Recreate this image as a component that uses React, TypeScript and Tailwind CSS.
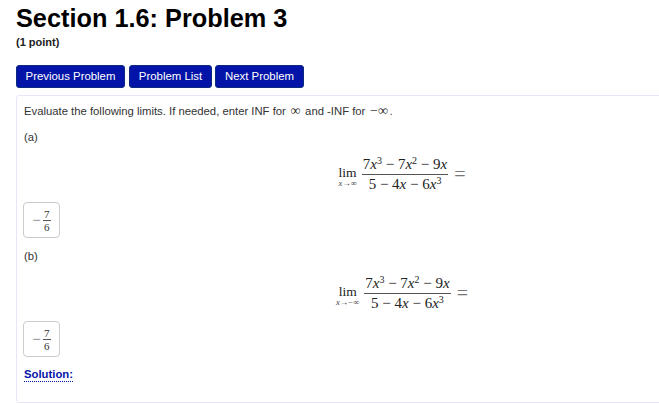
const Sup = ({ children }: { children: React.ReactNode }) => (
  <sup className="text-[10px] top-[-5px] not-italic">{children}</sup>
);

const V = ({ children }: { children: React.ReactNode }) => <i className="italic">{children}</i>;

const Limit = ({ to }: { to: string }) => (
  <div className="flex items-center justify-center w-[758px] h-[48px] mt-[6px] text-[#222] font-['Liberation_Serif',serif] text-[15px]">
    {/* lim */}
    <div className="flex flex-col items-center mr-[5px] mt-[6px]">
      <span className="leading-[11px] text-[13.5px]">lim</span>
      <span className="leading-[10px] text-[8.5px] text-[#444] whitespace-nowrap">
        <i>x</i>→{to}
      </span>
    </div>
    {/* fraction */}
    <div className="flex flex-col items-center">
      <div className="px-[1px] pb-[1px] leading-[17px] whitespace-nowrap">
        7<V>x</V><Sup>3</Sup> − 7<V>x</V><Sup>2</Sup> − 9<V>x</V>
      </div>
      <div className="w-full border-t border-[#555]" />
      <div className="px-[6px] pt-[1px] leading-[17px] whitespace-nowrap">
        5 − 4<V>x</V> − 6<V>x</V><Sup>3</Sup>
      </div>
    </div>
    <span className="ml-[6px] text-[#777] text-[20px] leading-none">=</span>
  </div>
);

const Answer = () => (
  <div className="w-[37px] h-[36px] mt-[4px] border border-[#ccc] rounded-[4px] flex items-center justify-center font-['Liberation_Serif',serif] text-[#333]">
    <span className="text-[#777] text-[15px] mr-[2px]">−</span>
    <div className="flex flex-col items-center text-[11px] leading-[12px]">
      <span>7</span>
      <span className="w-[8px] border-t border-[#555]" />
      <span>6</span>
    </div>
  </div>
);

const NavButton = ({ label, width }: { label: string; width: string }) => (
  <button className={`${width} h-[23px] bg-[#0414a8] border border-[#0a2a80] rounded-[3px] text-white text-[11.4px] leading-none text-center`}>
    {label}
  </button>
);

const Inf = ({ children }: { children: React.ReactNode }) => (
  <span className="mx-[1.5px] font-['Liberation_Serif',serif] text-[14px] leading-none">{children}</span>
);

export default function App() {
  return (
    <div className="w-[659px] h-[404px] bg-white overflow-hidden font-['Liberation_Sans',Arial,sans-serif] text-[#222]">
      <div className="pl-[16px] pt-[3px]">
        <h1 className="text-[25.3px] leading-[30px] font-bold text-black">Section 1.6: Problem 3</h1>
        <p className="text-[11px] leading-[13px] mt-[3px] font-bold text-[#222]">(1 point)</p>

        <div className="flex mt-[16px]">
          <NavButton label="Previous Problem" width="w-[109px] mr-[4px]" />
          <NavButton label="Problem List" width="w-[83px] mr-[3px]" />
          <NavButton label="Next Problem" width="w-[89px]" />
        </div>

        {/* problem body */}
        <div className="mt-[7px] w-[800px] h-[308px] border border-[#e6e6fa] rounded-l-[3px] pl-[6px] pt-[8px] text-[11.3px] leading-[14px]">
          <p className="text-[#333] pl-[1px]">
            Evaluate the following limits. If needed, enter INF for <Inf>∞</Inf> and -INF for <Inf>−∞</Inf>.
          </p>
          <p className="mt-[12px] pl-[1px] text-[#333]">(a)</p>
          <Limit to="∞" />
          <Answer />
          <p className="mt-[11px] pl-[1px] text-[#333]">(b)</p>
          <Limit to="−∞" />
          <Answer />
          <a className="inline-block mt-[11px] ml-[1px] font-bold text-[#0414a8] leading-[13px] border-b border-dotted border-[#0414a8]">
            Solution:
          </a>
        </div>
      </div>
    </div>
  );
}
